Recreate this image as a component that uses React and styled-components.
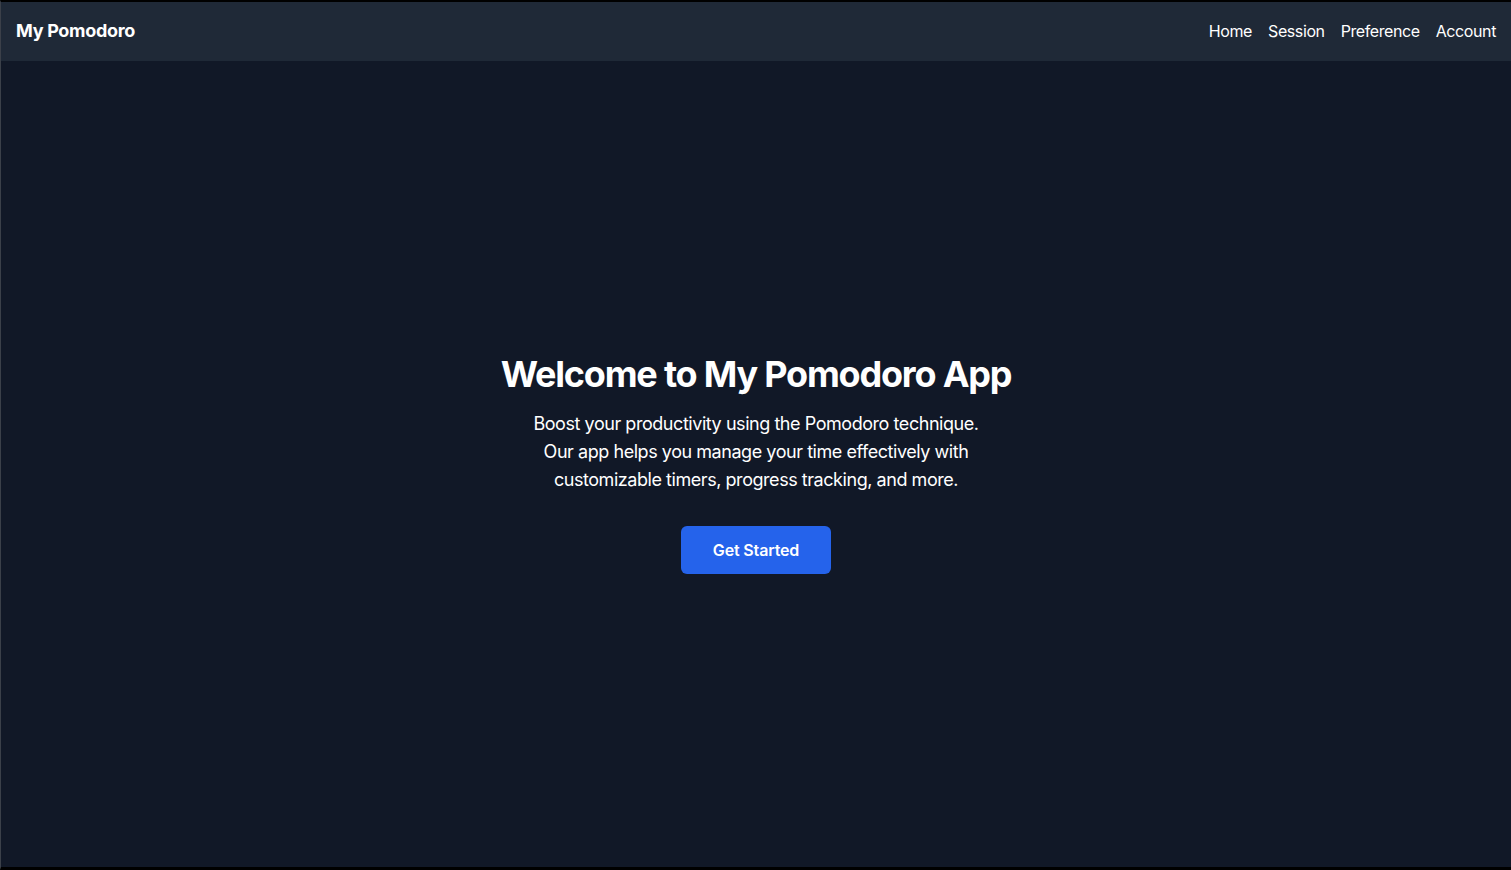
import React from "react";
import styled, { createGlobalStyle } from "styled-components";

const Global = createGlobalStyle`
  html, body { margin: 0; padding: 0; background: #000; }
  body { font-family: Inter, "Noto Sans", "Liberation Sans", sans-serif; -webkit-font-smoothing: antialiased; }
  * { box-sizing: border-box; }
`;

const Window = styled.div`
  height: 870px;
  display: flex;
  flex-direction: column;
  border-top: 2px solid #000;
  border-bottom: 3px solid #000;
  border-left: 1px solid #3b4049;
  background: #111827;
  color: #fff;
`;

const Nav = styled.nav`
  height: 59px;
  flex-shrink: 0;
  background: #1f2937;
  display: flex;
  align-items: center;
  justify-content: space-between;
  padding: 0 15px 2px 15px;
`;

const Brand = styled.a`
  font-size: 18px;
  font-weight: 700;
  color: #fff;
  text-decoration: none;
  letter-spacing: -0.3px;
`;

const Links = styled.div`
  display: flex;
  gap: 16px;
`;

const NavLink = styled.a`
  font-size: 16px;
  color: #fff;
  text-decoration: none;
  letter-spacing: -0.4px;
`;

const Main = styled.main`
  flex: 1;
  display: flex;
  flex-direction: column;
  align-items: center;
  justify-content: center;
  text-align: center;
`;

const Title = styled.h1`
  margin: 0 0 16px;
  font-size: 36px;
  line-height: 40px;
  font-weight: 700;
  letter-spacing: -1.2px;
`;

const Lead = styled.p`
  margin: 0 0 32px;
  max-width: 470px;
  font-size: 18px;
  line-height: 28px;
  letter-spacing: -0.45px;
`;

const Button = styled.button`
  height: 48px;
  padding: 0 32px;
  border: none;
  border-radius: 6px;
  background: #2563eb;
  color: #fff;
  font-family: inherit;
  font-size: 16px;
  font-weight: 600;
  letter-spacing: -0.15px;
  cursor: pointer;
`;

export default function App() {
  return (
    <>
      <Global />
      <Window>
        <Nav>
          <Brand href="#">My Pomodoro</Brand>
          <Links>
            <NavLink href="#">Home</NavLink>
            <NavLink href="#">Session</NavLink>
            <NavLink href="#">Preference</NavLink>
            <NavLink href="#">Account</NavLink>
          </Links>
        </Nav>
        <Main>
          <Title>Welcome to My Pomodoro App</Title>
          <Lead>
            Boost your productivity using the Pomodoro technique. Our app helps you manage your time effectively with customizable timers, progress tracking, and more.
          </Lead>
          <Button>Get Started</Button>
        </Main>
      </Window>
    </>
  );
}
